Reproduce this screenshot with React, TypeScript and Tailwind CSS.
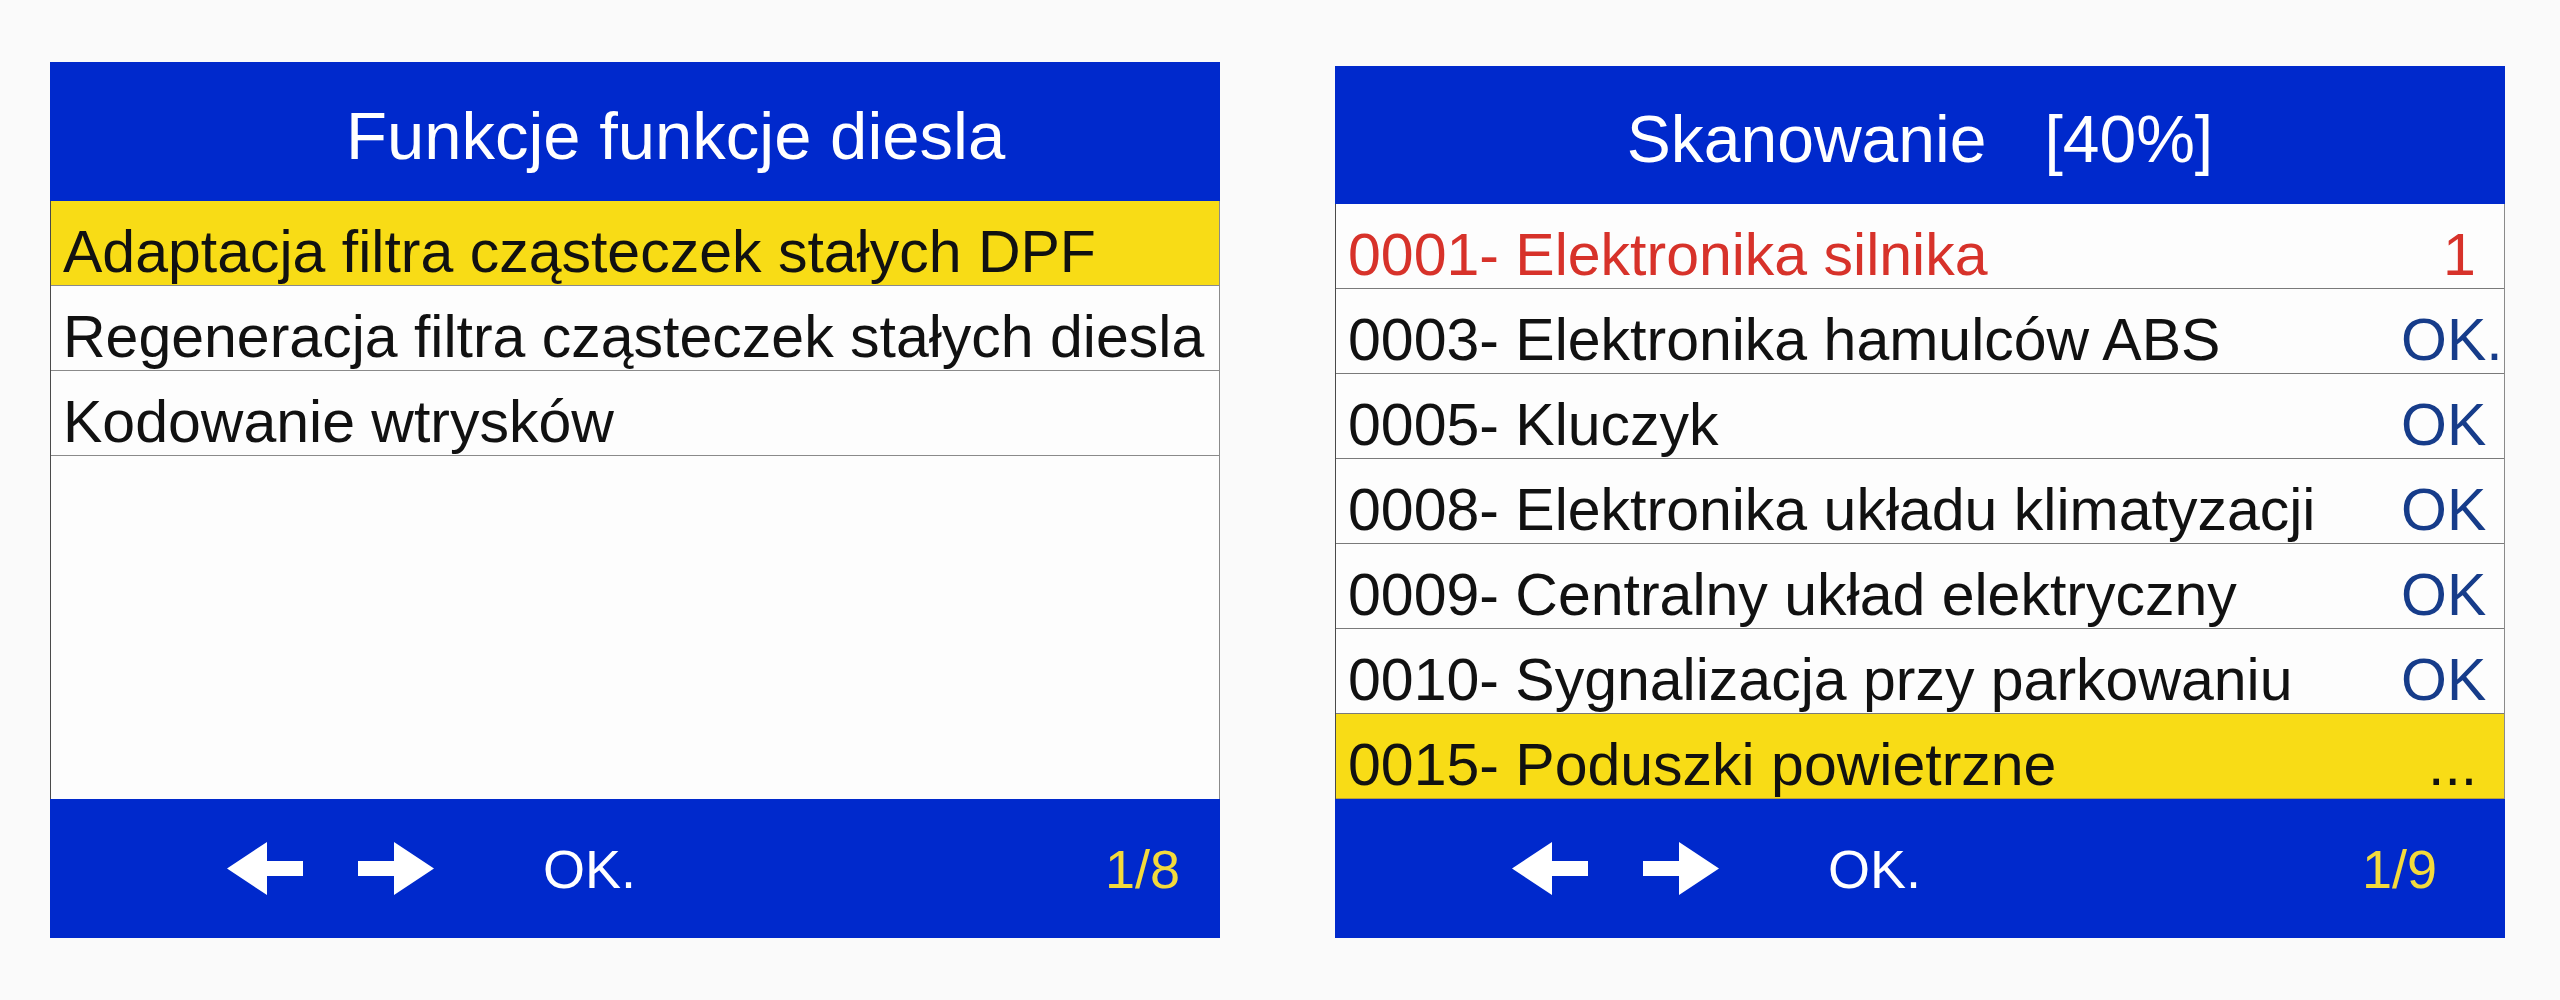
import React from 'react';

type ScanRow = { code: string; name: string; status: string; tone?: 'error' | 'active' };

const dieselItems = [
  'Adaptacja filtra cząsteczek stałych DPF',
  'Regeneracja filtra cząsteczek stałych diesla',
  'Kodowanie wtrysków',
];

const scanRows: ScanRow[] = [
  { code: '0001', name: 'Elektronika silnika', status: '1', tone: 'error' },
  { code: '0003', name: 'Elektronika hamulców ABS', status: 'OK.' },
  { code: '0005', name: 'Kluczyk', status: 'OK' },
  { code: '0008', name: 'Elektronika układu klimatyzacji', status: 'OK' },
  { code: '0009', name: 'Centralny układ elektryczny', status: 'OK' },
  { code: '0010', name: 'Sygnalizacja przy parkowaniu', status: 'OK' },
  { code: '0015', name: 'Poduszki powietrzne', status: '...', tone: 'active' },
];

const ArrowLeft = () => (
  <svg width="76" height="53" viewBox="0 0 76 53" className="shrink-0">
    <polygon points="0,26.5 40,0 40,19 76,19 76,34 40,34 40,53" fill="#ffffff" />
  </svg>
);

const ArrowRight = () => (
  <svg width="76" height="53" viewBox="0 0 76 53" className="shrink-0">
    <polygon points="0,19 36,19 36,0 76,26.5 36,53 36,34 0,34" fill="#ffffff" />
  </svg>
);

const Footer: React.FC<{ page: string; padRight: string }> = ({ page, padRight }) => (
  <div className={`flex h-[139px] items-center bg-[#0029cc] pl-[177px] ${padRight}`}>
    <ArrowLeft />
    <div className="ml-[55px]">
      <ArrowRight />
    </div>
    <span className="ml-[109px] text-[54px] leading-none text-white">OK.</span>
    <span className="ml-auto text-[54px] leading-none text-[#f3da3c]">{page}</span>
  </div>
);

const statusPad = (s: string) => {
  if (s === '1') return 'pl-[42px]';
  if (s === '...') return 'pl-[27px]';
  return 'pl-0';
};

export default function App() {
  return (
    <div className="flex h-[1000px] w-[2560px] items-start gap-[115px] bg-[#fafafa] pl-[50px] pt-[62px] font-['Liberation_Sans',Arial,sans-serif]">
      {/* diesel functions */}
      <div className="flex w-[1170px] flex-col">
        <div className="flex h-[139px] items-center bg-[#0029cc] pl-[296px] pt-[8px] text-[67px] leading-none text-white">
          Funkcje funkcje diesla
        </div>
        <div className="flex h-[598px] flex-col border-l border-r border-l-[#4a4a4a] border-r-[#8a8a8a] bg-[#fdfdfd]">
          {dieselItems.map((item, i) => (
            <div
              key={item}
              className={`h-[85px] shrink-0 border-b border-[#8a8a8a] pl-[12px] pt-[22px] text-[59px] leading-[58px] text-[#111] whitespace-nowrap ${
                i === 0 ? 'bg-[#f8dc16]' : 'bg-[#fdfdfd]'
              }`}
            >
              {item}
            </div>
          ))}
        </div>
        <Footer page="1/8" padRight="pr-[40px]" />
      </div>

      {/* scanning */}
      <div className="mt-[4px] flex w-[1170px] flex-col">
        <div className="flex h-[138px] items-center justify-center bg-[#0029cc] pt-[8px] text-[66px] leading-none text-white">
          <span>Skanowanie</span>
          <span className="ml-[58px]">[40%]</span>
        </div>
        <div className="flex flex-col border-l border-r border-l-[#4a4a4a] border-r-[#8a8a8a] bg-[#fdfdfd]">
          {scanRows.map((row, i) => (
            <div
              key={row.code}
              className={`flex h-[85px] shrink-0 items-start pl-[12px] pt-[22px] text-[59px] leading-[58px] whitespace-nowrap ${
                i < scanRows.length - 1 ? 'border-b border-[#7a7a7a]' : 'border-b border-[#b8a23a]'
              } ${row.tone === 'active' ? 'bg-[#f8dc16]' : 'bg-[#fdfdfd]'} ${
                row.tone === 'error' ? 'text-[#d7322a]' : 'text-[#111]'
              }`}
            >
              <span className="flex-1">
                {row.code}- {row.name}
              </span>
              <span
                className={`w-[103px] shrink-0 ${statusPad(row.status)} ${
                  row.tone === 'error' ? 'text-[#d7322a]' : row.tone === 'active' ? 'text-[#111]' : 'text-[#163c8a]'
                }`}
              >
                {row.status}
              </span>
            </div>
          ))}
        </div>
        <Footer page="1/9" padRight="pr-[68px]" />
      </div>
    </div>
  );
}
